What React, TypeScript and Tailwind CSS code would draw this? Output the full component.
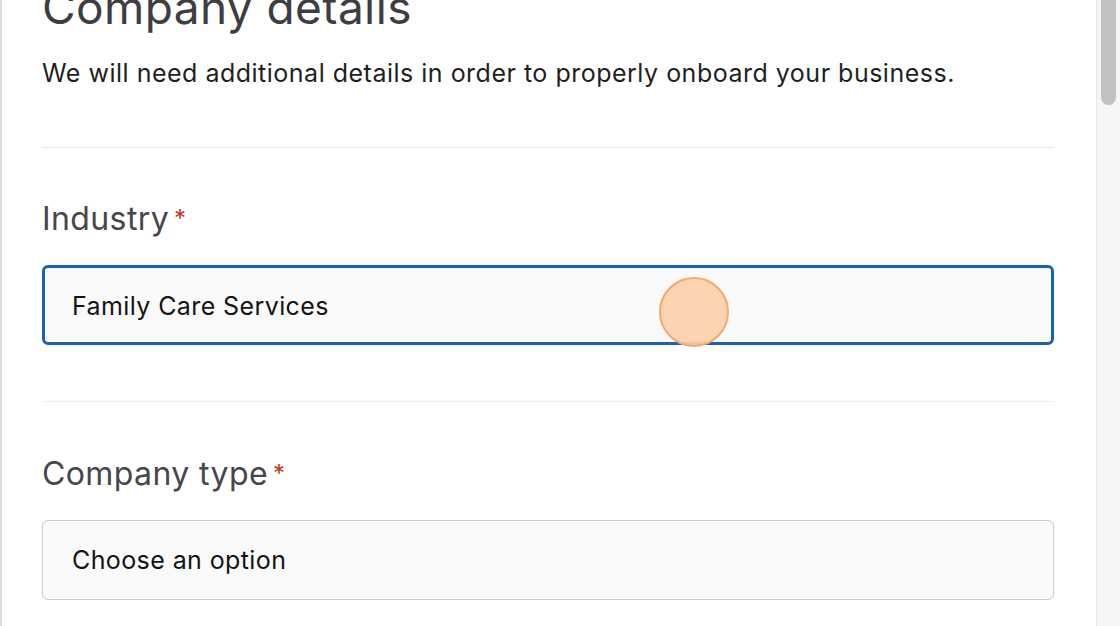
import React from "react";

function Label({ text }: { text: string }) {
  return (
    <div className="flex items-start text-[32px] leading-[40px] tracking-[0.4px] text-[#46464b]">
      <span>{text}</span>
      <span className="ml-[5px] mt-[8px] text-[24px] leading-[24px] text-[#c0391b]">*</span>
    </div>
  );
}

export default function App() {
  return (
    <div className="flex h-[626px] w-[1120px] overflow-hidden bg-white" style={{ fontFamily: "Inter, 'Open Sans', sans-serif" }}>
      <div className="relative flex-1 border-l-2 border-[#dcdcdc] pl-[40px] pr-[42px]">
        <h1 className="mt-[-17px] text-[46px] leading-[48px] tracking-[0.4px] font-normal text-[#3d3d42]">Company details</h1>
        <p className="mt-[26px] text-[25px] leading-[32px] tracking-[0.5px] text-[#1f1f1f]">We will need additional details in order to properly onboard your business.</p>
        <div className="mt-[58px] h-px bg-[#e6e6e6]" />
        <div className="mt-[51px]">
          <Label text="Industry" />
        </div>
        <div className="mt-[26px] flex h-[80px] items-center rounded-[6px] border-[3px] border-[#1c5fb8] bg-[#fafafa] pl-[27px] pt-[3px] text-[25px] tracking-[0.4px] text-[#141414]">
          Family Care Services
        </div>
        <div className="mt-[56px] h-px bg-[#eeeeee]" />
        <div className="mt-[52px]">
          <Label text="Company type" />
        </div>
        <div className="mt-[26px] flex h-[80px] items-center rounded-[6px] border border-[#cccccc] bg-[#fafafa] pl-[29px] pt-[1px] text-[25px] tracking-[0.4px] text-[#141414]">
          Choose an option
        </div>
        <div className="absolute left-[657px] top-[277px] h-[70px] w-[70px] rounded-full border-2 border-[#f4a869] bg-[#fdcfaa]/90" />
      </div>
      <div className="flex w-[24px] justify-center border-l border-[#e8e8e8] bg-[#f6f6f6]">
        <div className="h-[105px] w-[15px] rounded-b-full bg-[#c1c1c1]" />
      </div>
    </div>
  );
}
